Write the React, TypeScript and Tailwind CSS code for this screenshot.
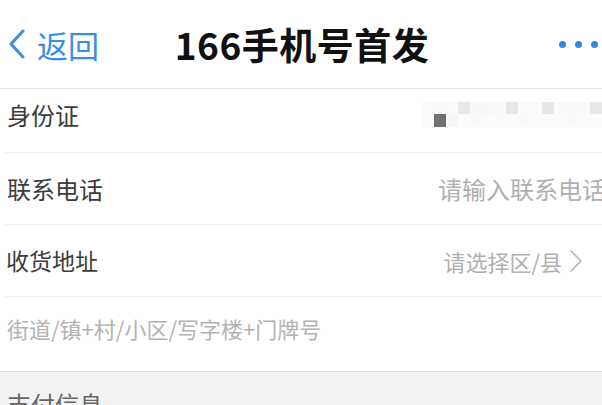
import React from 'react';

const mosaicTop = ['bg-[#fbfbfb]', 'bg-[#fafafa]', 'bg-[#fbfbfb]', 'bg-[#e9e9e9]', 'bg-[#f8f8f8]', 'bg-[#f9f9f9]', 'bg-[#fafafa]', 'bg-[#e7e7e7]', 'bg-[#fbfbfb]', 'bg-[#fbfbfb]', 'bg-[#e6e6e6]', 'bg-[#fbfbfb]', 'bg-[#f9f9f9]', 'bg-[#fbfbfb]', 'bg-[#e8e8e8]'];
const mosaicBottom = ['bg-[#fbfbfb]', 'bg-[#717171]', 'bg-[#f8f8f8]', 'bg-[#fcfcfc]', 'bg-[#fafafa]', 'bg-[#fcfcfc]', 'bg-[#fbfbfb]', 'bg-[#fcfcfc]', 'bg-[#fafafa]', 'bg-[#fcfcfc]', 'bg-[#fbfbfb]', 'bg-[#fcfcfc]', 'bg-[#fafafa]', 'bg-[#fcfcfc]', 'bg-[#fbfbfb]'];

const font = "font-['Noto_Sans_CJK_SC','Noto_Sans',sans-serif]";

const App = () => {
  return (
    <div className={`w-[602px] h-[405px] overflow-hidden bg-white flex flex-col ${font}`}>
      {/* Nav bar */}
      <header className="h-[89px] shrink-0 grid grid-cols-[1fr_auto_1fr] items-center border-b border-[#e6e6e6]">
        <div className="flex items-center pl-[8px] text-[#3a8ee3]">
          <svg width="17" height="30" viewBox="0 0 17 30" fill="none">
            <polyline points="15,2 3,15 15,28" stroke="#3a8ee3" strokeWidth="3" strokeLinecap="round" strokeLinejoin="round" />
          </svg>
          <span className="ml-[12px] text-[31px] leading-none">返回</span>
        </div>
        <h1 className="text-[37px] leading-none font-semibold text-[#111] tracking-[0.5px] pl-[2px]">166手机号首发</h1>
        <div className="flex justify-end items-center gap-[9px] pr-[4px] pt-[1px]">
          <span className="w-[7px] h-[7px] rounded-full bg-[#2f8ae0]" />
          <span className="w-[7px] h-[7px] rounded-full bg-[#2f8ae0]" />
          <span className="w-[7px] h-[7px] rounded-full bg-[#2f8ae0]" />
        </div>
      </header>

      {/* Form rows */}
      <div className="ml-[5px] h-[64px] shrink-0 flex items-center justify-between pb-[12px] border-b border-[#f0f0f0]">
        <span className="pl-[2px] text-[24px] leading-none text-[#3c3c3c]">身份证</span>
        <div className="flex flex-col">
          <div className="flex">
            {mosaicTop.map((c, i) => (
              <span key={i} className={`w-[12px] h-[12px] ${c}`} />
            ))}
          </div>
          <div className="flex">
            {mosaicBottom.map((c, i) => (
              <span key={i} className={`w-[12px] h-[13px] ${c}`} />
            ))}
          </div>
        </div>
      </div>

      <div className="ml-[5px] h-[72px] shrink-0 flex items-center justify-between border-b border-[#f0f0f0] overflow-hidden">
        <span className="pl-[2px] text-[24px] leading-none text-[#3c3c3c]">联系电话</span>
        <span className="mr-[-4px] text-[24px] leading-none text-[#b0b0b0] whitespace-nowrap">请输入联系电话</span>
      </div>

      <div className="ml-[5px] h-[72px] shrink-0 flex items-center justify-between border-b border-[#f0f0f0]">
        <span className="pl-[1px] text-[23px] leading-none text-[#3c3c3c]">收货地址</span>
        <div className="flex items-center pr-[19px]">
          <span className="text-[22px] leading-none text-[#b0b0b0]">请选择区/县</span>
          <svg className="ml-[7px]" width="14" height="24" viewBox="0 0 14 24" fill="none">
            <polyline points="2,2 12,12 2,22" stroke="#b5b5b5" strokeWidth="1.6" strokeLinecap="round" strokeLinejoin="round" />
          </svg>
        </div>
      </div>

      <div className="ml-[5px] h-[74px] shrink-0 flex items-center pb-[12px]">
        <span className="pl-[2px] text-[22px] leading-none text-[#b3b3b3]">街道/镇+村/小区/写字楼+门牌号</span>
      </div>

      {/* Payment section */}
      <div className="flex-1 bg-[#f2f2f2] border-t border-[#dedede] pt-[20px] pl-[7px]">
        <span className="text-[24px] leading-none text-[#666]">支付信息</span>
      </div>
    </div>
  );
};

export default App;
